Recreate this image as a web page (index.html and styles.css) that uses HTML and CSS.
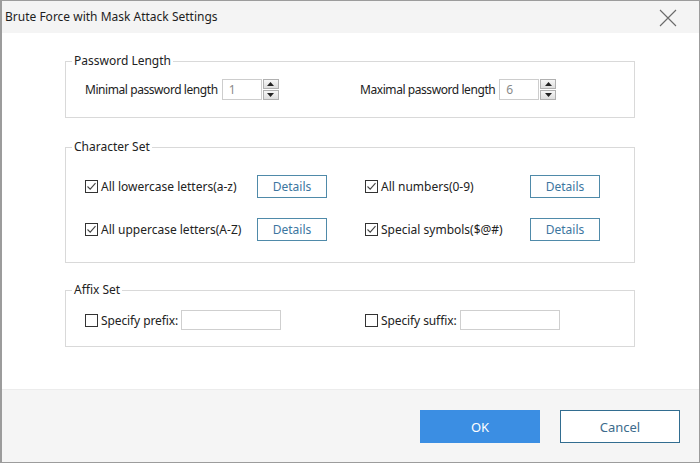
FILE: index.html
```html
<!DOCTYPE html>
<html>
<head>
<meta charset="utf-8">
<link rel="stylesheet" href="styles.css">
</head>
<body>
<div class="window">
  <div class="titlebar">
    <span class="title">Brute Force with Mask Attack Settings</span>
    <svg class="close" width="20" height="20" viewBox="0 0 20 20"><path d="M2 2 L18 18 M18 2 L2 18" stroke="#6a6a6a" stroke-width="1.1" fill="none"/></svg>
  </div>
  <div class="content">
    <fieldset class="group group-len">
      <legend>Password Length</legend>
      <div class="row len-row">
        <div class="cell">
          <span class="label">Minimal password length</span>
          <span class="num">1</span>
          <span class="spin"><span class="up"><svg width="7" height="4" viewBox="0 0 7 4"><path d="M0 4 L3.5 0 L7 4Z" fill="#222"/></svg></span><span class="down"><svg width="7" height="4" viewBox="0 0 7 4"><path d="M0 0 L3.5 4 L7 0Z" fill="#222"/></svg></span></span>
        </div>
        <div class="cell">
          <span class="label">Maximal password length</span>
          <span class="num">6</span>
          <span class="spin"><span class="up"><svg width="7" height="4" viewBox="0 0 7 4"><path d="M0 4 L3.5 0 L7 4Z" fill="#222"/></svg></span><span class="down"><svg width="7" height="4" viewBox="0 0 7 4"><path d="M0 0 L3.5 4 L7 0Z" fill="#222"/></svg></span></span>
        </div>
      </div>
    </fieldset>

    <fieldset class="group group-chars">
      <legend>Character Set</legend>
      <div class="row char-row">
        <div class="cell">
          <span class="check"><svg width="13" height="13" viewBox="0 0 13 13"><rect x="0.5" y="0.5" width="12" height="12" fill="#fff" stroke="#333"/><path d="M2.5 6.5 L5.2 9.2 L10.5 3.2" stroke="#444" stroke-width="1.1" fill="none"/></svg></span>
          <span class="clabel">All lowercase letters(a-z)</span>
          <span class="details">Details</span>
        </div>
        <div class="cell">
          <span class="check"><svg width="13" height="13" viewBox="0 0 13 13"><rect x="0.5" y="0.5" width="12" height="12" fill="#fff" stroke="#333"/><path d="M2.5 6.5 L5.2 9.2 L10.5 3.2" stroke="#444" stroke-width="1.1" fill="none"/></svg></span>
          <span class="clabel">All numbers(0-9)</span>
          <span class="details">Details</span>
        </div>
      </div>
      <div class="row char-row">
        <div class="cell">
          <span class="check"><svg width="13" height="13" viewBox="0 0 13 13"><rect x="0.5" y="0.5" width="12" height="12" fill="#fff" stroke="#333"/><path d="M2.5 6.5 L5.2 9.2 L10.5 3.2" stroke="#444" stroke-width="1.1" fill="none"/></svg></span>
          <span class="clabel">All uppercase letters(A-Z)</span>
          <span class="details">Details</span>
        </div>
        <div class="cell">
          <span class="check"><svg width="13" height="13" viewBox="0 0 13 13"><rect x="0.5" y="0.5" width="12" height="12" fill="#fff" stroke="#333"/><path d="M2.5 6.5 L5.2 9.2 L10.5 3.2" stroke="#444" stroke-width="1.1" fill="none"/></svg></span>
          <span class="clabel">Special symbols($@#)</span>
          <span class="details">Details</span>
        </div>
      </div>
    </fieldset>

    <fieldset class="group group-affix">
      <legend>Affix Set</legend>
      <div class="row affix-row">
        <div class="cell">
          <span class="check"><svg width="13" height="13" viewBox="0 0 13 13"><rect x="0.5" y="0.5" width="12" height="12" fill="#fff" stroke="#333"/></svg></span>
          <span class="alabel">Specify prefix:</span>
          <span class="text-input"></span>
        </div>
        <div class="cell">
          <span class="check"><svg width="13" height="13" viewBox="0 0 13 13"><rect x="0.5" y="0.5" width="12" height="12" fill="#fff" stroke="#333"/></svg></span>
          <span class="alabel">Specify suffix:</span>
          <span class="text-input"></span>
        </div>
      </div>
    </fieldset>
  </div>
  <div class="footer">
    <span class="btn btn-ok">OK</span>
    <span class="btn btn-cancel">Cancel</span>
  </div>
</div>
</body>
</html>
```
FILE: styles.css
```css
* { box-sizing: border-box; }
html, body { margin: 0; padding: 0; background: #fff; }
body {
  font-family: "Noto Sans", "Open Sans", "Liberation Sans", sans-serif;
  font-size: 12px;
  color: #222;
}
.window {
  width: 700px;
  height: 463px;
  border: 1px solid #9c9c9c;
  border-left-width: 2px;
  display: flex;
  flex-direction: column;
  background: #fff;
}
.titlebar {
  height: 32px;
  background: #f4f4f4;
  display: flex;
  align-items: center;
  justify-content: space-between;
  padding: 0 21px 2px 3px;
  flex: none;
}
.title { font-size: 12px; color: #1e1e1e; }
.close { display: block; margin-top: 4px; }
.content {
  flex: 1;
  padding: 20px 0 0 63px;
}
.group {
  width: 570px;
  margin: 0;
  border: 1px solid #d9d9d9;
  padding: 0 0 0 6px;
}
.group legend {
  padding: 0 2px;
  line-height: 16px;
  color: #222;
}
.row {
  display: grid;
  grid-template-columns: 294px 1fr;
  align-items: center;
  padding-left: 13px;
}
.cell { display: flex; align-items: center; }

.group-len .len-row { height: 21px; margin: 10px 0 17px; grid-template-columns: 275px 1fr; }
.label { margin-right: 4px; letter-spacing: -0.43px; }
.num {
  width: 40px;
  height: 21px;
  border: 1px solid #cdcdcd;
  color: #8a8a8a;
  padding-left: 6px;
  line-height: 19px;
}
.spin {
  display: flex;
  flex-direction: column;
  margin-left: 1px;
  gap: 1px;
}
.spin .up, .spin .down {
  width: 16px;
  height: 10px;
  border: 1px solid #b0b0b0;
  background: linear-gradient(#f6f6f6, #dedede);
  display: flex;
  align-items: center;
  justify-content: center;
}
.group-len { margin-bottom: 21px; }

.group-chars { margin-bottom: 19px; }
.char-row { height: 23px; }
.char-row:first-of-type { margin-top: 20px; }
.group-chars .char-row + .char-row { margin-top: 20px; margin-bottom: 21px; }
.check { display: flex; width: 13px; height: 13px; margin-right: 3px; }
.check svg { display: block; }
.clabel { width: 156px; }
.details {
  width: 70px;
  height: 23px;
  border: 1px solid #4f8aa9;
  color: #3c76a0;
  display: flex;
  align-items: center;
  justify-content: center;
  font-size: 12px;
}
.row .cell:nth-child(2) .clabel { width: 149px; }
.group-chars .row { grid-template-columns: 280px 1fr; }

.affix-row { height: 20px; margin: 12px 0 16px; grid-template-columns: 280px 1fr; }
.alabel { margin-right: 3px; letter-spacing: -0.1px; }
.text-input {
  width: 100px;
  height: 20px;
  border: 1px solid #cfcfcf;
}

.footer {
  height: 73px;
  flex: none;
  background: #f5f5f5;
  border-top: 1px solid #ececec;
  display: flex;
  justify-content: flex-end;
  align-items: flex-start;
  padding: 20px 19px 0 0;
  gap: 20px;
}
.btn {
  width: 120px;
  height: 33px;
  display: flex;
  align-items: center;
  justify-content: center;
  font-size: 13px;
}
.btn-ok { background: #3b8ee3; color: #fff; }
.btn-cancel { background: #fff; border: 1px solid #326d90; color: #3d6b8c; }
```
